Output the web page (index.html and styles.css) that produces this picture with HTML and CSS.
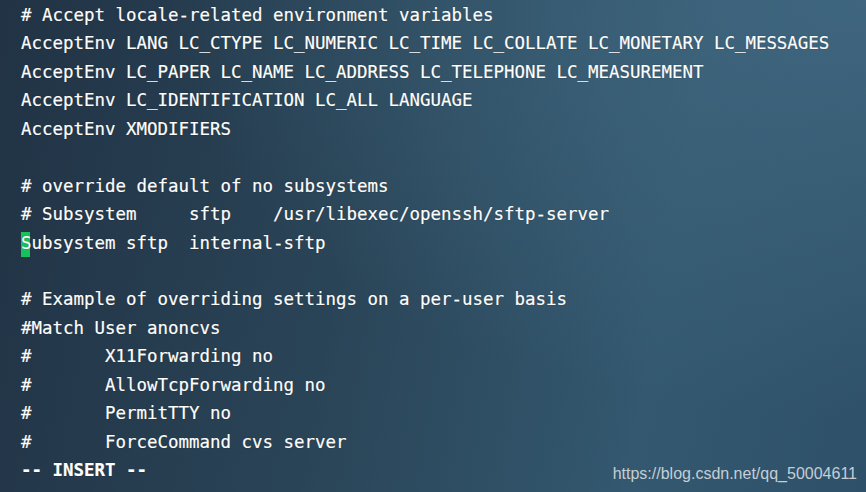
FILE: index.html
```html
<!DOCTYPE html>
<html>
<head>
<meta charset="utf-8">
<link rel="stylesheet" href="styles.css">
</head>
<body>
<div class="term">
<pre class="code"># Accept locale-related environment variables
AcceptEnv LANG LC_CTYPE LC_NUMERIC LC_TIME LC_COLLATE LC_MONETARY LC_MESSAGES
AcceptEnv LC_PAPER LC_NAME LC_ADDRESS LC_TELEPHONE LC_MEASUREMENT
AcceptEnv LC_IDENTIFICATION LC_ALL LANGUAGE
AcceptEnv XMODIFIERS

# override default of no subsystems
# Subsystem     sftp    /usr/libexec/openssh/sftp-server
Subsystem sftp  internal-sftp

# Example of overriding settings on a per-user basis
#Match User anoncvs
#       X11Forwarding no
#       AllowTcpForwarding no
#       PermitTTY no
#       ForceCommand cvs server
<b class="mode">-- INSERT --</b></pre>
<div class="watermark">https://blog.csdn.net/qq_50004611</div>
</div>
</body>
</html>
```
FILE: styles.css
```css
html, body {
  margin: 0;
  padding: 0;
}
body {
  width: 866px;
  height: 492px;
  overflow: hidden;
}
.term {
  position: relative;
  width: 866px;
  height: 492px;
  box-sizing: border-box;
  padding: 1px 0 0 21px;
  background:
    radial-gradient(ellipse 700px 420px at 100% 0%, rgba(64,104,128,0.9) 0%, rgba(64,104,128,0) 100%),
    linear-gradient(100deg, #213345 0%, #2a4457 40%, #33586f 75%, #2e5169 100%);
  background-color: #2a4457;
}
.code {
  position: relative;
  z-index: 0;
  margin: 0;
  font-family: "DejaVu Sans Mono", monospace;
  font-size: 17.45px;
  line-height: 28.44px;
  color: #ffffff;
  white-space: pre;
  text-shadow: 0 0 1px rgba(0,0,0,0.6);
  -webkit-text-stroke: 0.2px #ffffff;
}
/* block cursor on the "S" of line 9 */
.code::before {
  content: "";
  position: absolute;
  z-index: -1;
  left: 0;
  top: 231px;
  width: 9px;
  height: 25px;
  background: #16c35a;
}
.mode {
  font-weight: bold;
}
.watermark {
  position: absolute;
  right: 9px;
  bottom: 9px;
  font-family: "Liberation Sans", Arial, sans-serif;
  font-size: 16px;
  color: #c5ced6;
}
```
